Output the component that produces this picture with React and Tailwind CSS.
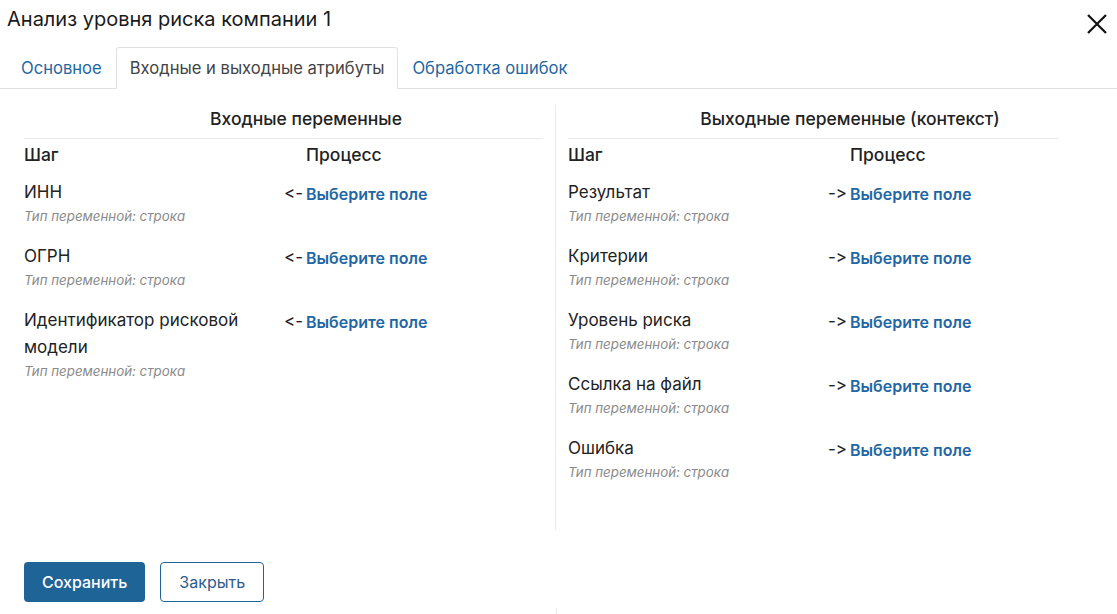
import React, { useState } from "react";

const inputVars = [
  { name: "ИНН" },
  { name: "ОГРН" },
  { name: "Идентификатор рисковой модели" },
];

const outputVars = [
  { name: "Результат" },
  { name: "Критерии" },
  { name: "Уровень риска" },
  { name: "Ссылка на файл" },
  { name: "Ошибка" },
];

const tabs = ["Основное", "Входные и выходные атрибуты", "Обработка ошибок"];

const VarColumn = ({ title, items, arrow, width, titlePad }) => (
  <div className={`${width} flex flex-col`}>
    <div className="border-b border-[#e9e9ee] pb-[6px]">
      <div className={`text-center font-medium text-[17.5px] leading-[27px] text-[#222] ${titlePad}`}>
        {title}
      </div>
    </div>
    <div className="flex mt-[2px] text-[17.5px] leading-[27px] font-medium text-[#222]">
      <div className="w-[258px]">Шаг</div>
      <div className="pl-[24px]">Процесс</div>
    </div>
    <div className="flex flex-col mt-[11px] gap-[16px]">
      {items.map((v) => (
        <div key={v.name} className="flex">
          <div className="w-[258px] pr-2">
            <div className="text-[17px] leading-[27px] text-[#222]">{v.name}</div>
            <div className="text-[13.3px] leading-[21px] italic text-[#8a8a8a]">
              Тип переменной: строка
            </div>
          </div>
          <div className="flex text-[16px] leading-[27px] pt-[2px]">
            <span className="w-[24px] pr-[3px] text-right text-[17px] leading-[24px] text-[#222] [font-feature-settings:'calt'_0,'liga'_0]">
              {arrow}
            </span>
            <a href="#" className="font-semibold text-[#1f67a3]">
              Выберите поле
            </a>
          </div>
        </div>
      ))}
    </div>
  </div>
);

export default function App() {
  const [active, setActive] = useState(1);

  return (
    <div className="w-[1117px] h-[614px] bg-white overflow-hidden flex flex-col font-['Inter',sans-serif] text-[#222]">
      <div className="flex items-start justify-between pl-[7px] pr-[9px] pt-[5px] h-[47px] shrink-0">
        <h1 className="text-[20px] leading-[28px] text-[#1a1a1a]">Анализ уровня риска компании 1</h1>
        <button className="mt-[8px] text-[#111]">
          <svg width="22" height="22" viewBox="0 0 22 22" fill="none" stroke="currentColor" strokeWidth="2.2">
            <path d="M2 2 L20 20 M20 2 L2 20" />
          </svg>
        </button>
      </div>

      <div className="flex border-b border-[#e1e1e1] pl-[7px] h-[42px] shrink-0">
        {tabs.map((t, i) => (
          <button
            key={t}
            onClick={() => setActive(i)}
            className={`px-[13px] text-[16.6px] leading-[40px] -mb-px rounded-t-[3px] ${
              active === i
                ? "bg-white border border-[#e1e1e1] border-b-white text-[#444]"
                : "border border-transparent text-[#1f67a3]"
            }`}
          >
            {t}
          </button>
        ))}
      </div>

      <div className="flex px-[24px] pt-[16px] h-[441px] shrink-0">
        <VarColumn title="Входные переменные" items={inputVars} arrow="<-" width="w-[519px]" titlePad="pl-[45px]" />
        <div className="w-px bg-[#e9e9ee] mx-[12px]" />
        <VarColumn title="Выходные переменные (контекст)" items={outputVars} arrow="->" width="w-[491px]" titlePad="pl-[73px]" />
      </div>

      <div className="flex gap-[15px] px-[24px] pt-[32px] shrink-0">
        <button className="h-[40px] px-[18px] rounded-[4px] bg-[#1f6497] text-white font-medium text-[16px]">
          Сохранить
        </button>
        <button className="h-[40px] px-[18px] rounded-[4px] border border-[#1f6497] text-[#2a5d8c] text-[16px]">
          Закрыть
        </button>
      </div>
      <div className="ml-[556px] w-px h-[10px] bg-[#e9e9ee] mt-[6px] shrink-0" />
    </div>
  );
}
